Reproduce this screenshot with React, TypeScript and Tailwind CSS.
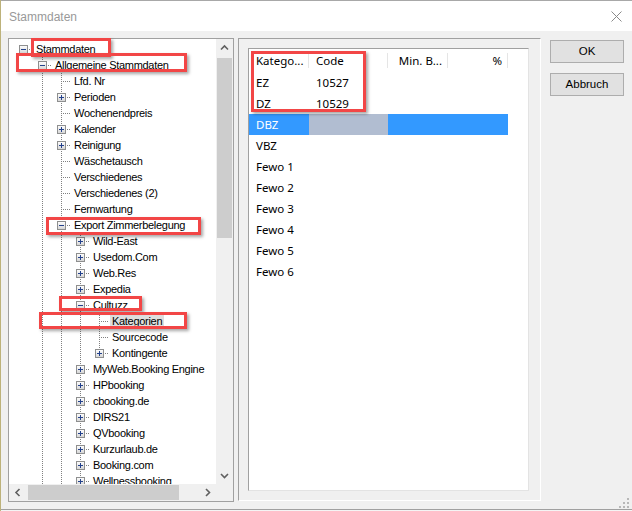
import React from "react";

type Exp = "plus" | "minus" | "";
const TREE: [number, string, Exp][] = [
  [0, "Stammdaten", "minus"],
  [1, "Allgemeine Stammdaten", "minus"],
  [2, "Lfd. Nr", ""],
  [2, "Perioden", "plus"],
  [2, "Wochenendpreis", ""],
  [2, "Kalender", "plus"],
  [2, "Reinigung", "plus"],
  [2, "Wäschetausch", ""],
  [2, "Verschiedenes", ""],
  [2, "Verschiedenes (2)", ""],
  [2, "Fernwartung", ""],
  [2, "Export Zimmerbelegung", "minus"],
  [3, "Wild-East", "plus"],
  [3, "Usedom.Com", "plus"],
  [3, "Web.Res", "plus"],
  [3, "Expedia", "plus"],
  [3, "Cultuzz", "minus"],
  [4, "Kategorien", ""],
  [4, "Sourcecode", ""],
  [4, "Kontingente", "plus"],
  [3, "MyWeb.Booking Engine", "plus"],
  [3, "HPbooking", "plus"],
  [3, "cbooking.de", "plus"],
  [3, "DIRS21", "plus"],
  [3, "QVbooking", "plus"],
  [3, "Kurzurlaub.de", "plus"],
  [3, "Booking.com", "plus"],
  [3, "Wellnessbooking", "plus"],
];

function hasNext(i: number): boolean {
  const L = TREE[i][0];
  for (let j = i + 1; j < TREE.length; j++) {
    const l = TREE[j][0];
    if (l === L) return true;
    if (l < L) return false;
  }
  return L >= 1;
}

function ancestorIndex(i: number, a: number): number {
  for (let j = i - 1; j >= 0; j--) if (TREE[j][0] === a) return j;
  return -1;
}

const DOT = "#808080";

function PassCell({ v }: { v: boolean }) {
  return (
    <svg width="19" height="16" className="block shrink-0">
      {v && (
        <line x1="9.5" y1="0" x2="9.5" y2="16" stroke={DOT} strokeDasharray="1 1" shapeRendering="crispEdges" />
      )}
    </svg>
  );
}

function OwnCell({ top, bottom, exp }: { top: boolean; bottom: boolean; exp: Exp }) {
  return (
    <svg width="19" height="16" className="block shrink-0">
      {top && <line x1="9.5" y1="0" x2="9.5" y2="8" stroke={DOT} strokeDasharray="1 1" shapeRendering="crispEdges" />}
      {bottom && <line x1="9.5" y1="8" x2="9.5" y2="16" stroke={DOT} strokeDasharray="1 1" shapeRendering="crispEdges" />}
      <line x1="11" y1="8.5" x2="19" y2="8.5" stroke={DOT} strokeDasharray="1 1" shapeRendering="crispEdges" />
      {exp && (
        <g shapeRendering="crispEdges">
          <rect x="5.5" y="4.5" width="8" height="8" fill="url(#tbgrad)" stroke="#8e8f8f" />
          <rect x="7" y="8" width="5" height="1" fill="#23418c" />
          {exp === "plus" && <rect x="9" y="6" width="1" height="5" fill="#23418c" />}
        </g>
      )}
    </svg>
  );
}

function TreeRow({ i }: { i: number }) {
  const [level, label, exp] = TREE[i];
  const cells = [];
  for (let a = 0; a < level; a++) {
    const ai = ancestorIndex(i, a);
    cells.push(<PassCell key={a} v={ai >= 0 && hasNext(ai)} />);
  }
  const sel = label === "Kategorien";
  return (
    <div className="flex h-[16px] items-center pl-[5px]">
      {cells}
      <OwnCell top={i !== 0} bottom={hasNext(i)} exp={exp} />
      <span
        className={`ml-[1px] px-[2px] h-[16px] leading-[16px] whitespace-nowrap text-[11px] tracking-[-0.3px] text-black ${
          sel ? "bg-[#dedede]" : ""
        }`}
      >
        {label}
      </span>
    </div>
  );
}

function Chevron({ dir }: { dir: "up" | "down" | "left" | "right" }) {
  const d =
    dir === "up"
      ? "M1 5.5 L4.5 2 L8 5.5"
      : dir === "down"
      ? "M1 2 L4.5 5.5 L8 2"
      : dir === "left"
      ? "M5.5 1 L2 4.5 L5.5 8"
      : "M2 1 L5.5 4.5 L2 8";
  const w = dir === "up" || dir === "down" ? 9 : 7;
  const h = dir === "up" || dir === "down" ? 7 : 9;
  return (
    <svg width={w} height={h} className="block">
      <path d={d} fill="none" stroke="#606060" strokeWidth="1.6" />
    </svg>
  );
}

function RedBox({ cls }: { cls: string }) {
  return (
    <div
      className={`absolute border-[3px] border-[#f24646] shadow-[2px_2px_3px_rgba(0,0,0,0.35)] pointer-events-none ${cls}`}
    />
  );
}

const LIST: { k: string; c: string; sel?: boolean }[] = [
  { k: "EZ", c: "10527" },
  { k: "DZ", c: "10529" },
  { k: "DBZ", c: "", sel: true },
  { k: "VBZ", c: "" },
  { k: "Fewo 1", c: "" },
  { k: "Fewo 2", c: "" },
  { k: "Fewo 3", c: "" },
  { k: "Fewo 4", c: "" },
  { k: "Fewo 5", c: "" },
  { k: "Fewo 6", c: "" },
];

function HeaderCell({ w, text, right }: { w: string; text: string; right?: boolean }) {
  return (
    <div className={`flex h-full items-center ${w}`}>
      <div className={`flex-1 whitespace-nowrap ${right ? "text-right pr-[5px]" : "pl-[7px]"}`}>{text}</div>
      <div className="w-[1px] h-[15px] bg-[#e5e5e5]" />
    </div>
  );
}

export default function App() {
  return (
    <div
      className="relative w-[632px] h-[511px] bg-[#f0f0f0] border-l border-[#bdb27a] overflow-hidden flex flex-col"
      style={{ fontFamily: '"Liberation Sans", Arial, sans-serif' }}
    >
      <svg width="0" height="0" className="absolute">
        <defs>
          <linearGradient id="tbgrad" x1="0" y1="0" x2="0" y2="1">
            <stop offset="0" stopColor="#ffffff" />
            <stop offset="1" stopColor="#d4d4d4" />
          </linearGradient>
        </defs>
      </svg>

      {/* Title bar */}
      <div className="h-[31px] shrink-0 bg-white border-t border-[#a8a8a8] flex items-center justify-between pl-[8px] pr-[10px]">
        <span className="text-[12px] text-[#999999] leading-none mt-[2px]">Stammdaten</span>
        <svg width="11" height="11" className="block mt-[1px]">
          <path d="M0.5 0.5 L10.5 10.5 M10.5 0.5 L0.5 10.5" stroke="#8a8a8a" strokeWidth="1" />
        </svg>
      </div>

      {/* Body */}
      <div className="flex-1 flex pt-[7px] pl-[7px]">
        {/* Tree panel */}
        <div className="w-[226px] h-[464px] border border-[#a0a0a0] bg-white flex flex-col shrink-0">
          <div className="flex flex-1 min-h-0">
            <div className="flex-1 overflow-hidden pt-[2px]">
              {TREE.map((_, i) => (
                <TreeRow key={i} i={i} />
              ))}
            </div>
            <div className="w-[17px] bg-[#f0f0f0] flex flex-col items-center">
              <div className="h-[17px] w-full flex items-center justify-center">
                <Chevron dir="up" />
              </div>
              <div className="mt-[2px] w-[15px] h-[180px] bg-[#cdcdcd]" />
              <div className="flex-1" />
              <div className="h-[17px] w-full flex items-center justify-center">
                <Chevron dir="down" />
              </div>
            </div>
          </div>
          <div className="flex h-[17px] shrink-0">
            <div className="flex-1 bg-[#f0f0f0] flex items-center">
              <div className="w-[17px] h-full flex items-center justify-center">
                <Chevron dir="left" />
              </div>
              <div className="ml-[2px] w-[151px] h-[15px] bg-[#cdcdcd]" />
              <div className="flex-1" />
              <div className="w-[17px] h-full flex items-center justify-center">
                <Chevron dir="right" />
              </div>
            </div>
            <div className="w-[17px] bg-[#f0f0f0]" />
          </div>
        </div>

        {/* Right panel */}
        <div className="ml-[4px] w-[303px] h-[463px] shrink-0 border border-t-[#a0a0a0] border-l-[#a0a0a0] border-r-white border-b-white pt-[9px] pl-[9px] pr-[11px] pb-[9px]">
          <div
            className="w-full h-full bg-white border border-t-[#a0a0a0] border-l-[#a0a0a0] border-r-[#e3e3e3] border-b-[#e3e3e3] text-[11.5px] text-black"
            style={{ fontFamily: '"Noto Sans", "Liberation Sans", sans-serif' }}
          >
            <div className="flex h-[23px] items-center">
              <HeaderCell w="w-[60px]" text="Katego..." />
              <HeaderCell w="w-[79px]" text="Code" />
              <HeaderCell w="w-[60px]" text="Min. B..." right />
              <HeaderCell w="w-[60px]" text="%" right />
            </div>
            {LIST.map((r) => (
              <div key={r.k} className="flex h-[21px] items-center">
                <div
                  className={`w-[60px] h-full flex items-center pl-[7px] ${r.sel ? "bg-[#3399ff] text-white" : ""}`}
                >
                  {r.k}
                </div>
                <div className={`w-[79px] h-full flex items-center pl-[7px] ${r.sel ? "bg-[#b1bdd1]" : ""}`}>
                  {r.c}
                </div>
                <div className={`w-[120px] h-full ${r.sel ? "bg-[#3399ff]" : ""}`} />
              </div>
            ))}
          </div>
        </div>

        {/* Buttons */}
        <div className="ml-[9px] pt-[2px] flex flex-col gap-[10px]">
          <button className="w-[74px] h-[23px] bg-[#e1e1e1] border border-[#adadad] text-[11.5px] text-black leading-none">
            OK
          </button>
          <button className="w-[74px] h-[23px] bg-[#e1e1e1] border border-[#adadad] text-[11.5px] text-black leading-none">
            Abbruch
          </button>
        </div>
      </div>

      {/* Bottom frame */}
      <div className="h-[1px] shrink-0 bg-[#a0a0a0]" />
      <div className="h-[1px] shrink-0 bg-[#f4f4f4]" />

      {/* Resize grip */}
      <svg width="10" height="10" className="absolute right-[3px] bottom-[3px]">
        <g fill="#b8b8b8">
          <rect x="8" y="0" width="2" height="2" />
          <rect x="4" y="4" width="2" height="2" />
          <rect x="8" y="4" width="2" height="2" />
          <rect x="0" y="8" width="2" height="2" />
          <rect x="4" y="8" width="2" height="2" />
          <rect x="8" y="8" width="2" height="2" />
        </g>
      </svg>

      {/* Red annotation boxes */}
      <RedBox cls="left-[30px] top-[38px] w-[80px] h-[19px]" />
      <RedBox cls="left-[15px] top-[53px] w-[171px] h-[19px]" />
      <RedBox cls="left-[45px] top-[217px] w-[155px] h-[18px]" />
      <RedBox cls="left-[58px] top-[296px] w-[83px] h-[15px]" />
      <RedBox cls="left-[38px] top-[312px] w-[148px] h-[17px]" />
      <RedBox cls="left-[250px] top-[51px] w-[115px] h-[61px]" />
    </div>
  );
}
